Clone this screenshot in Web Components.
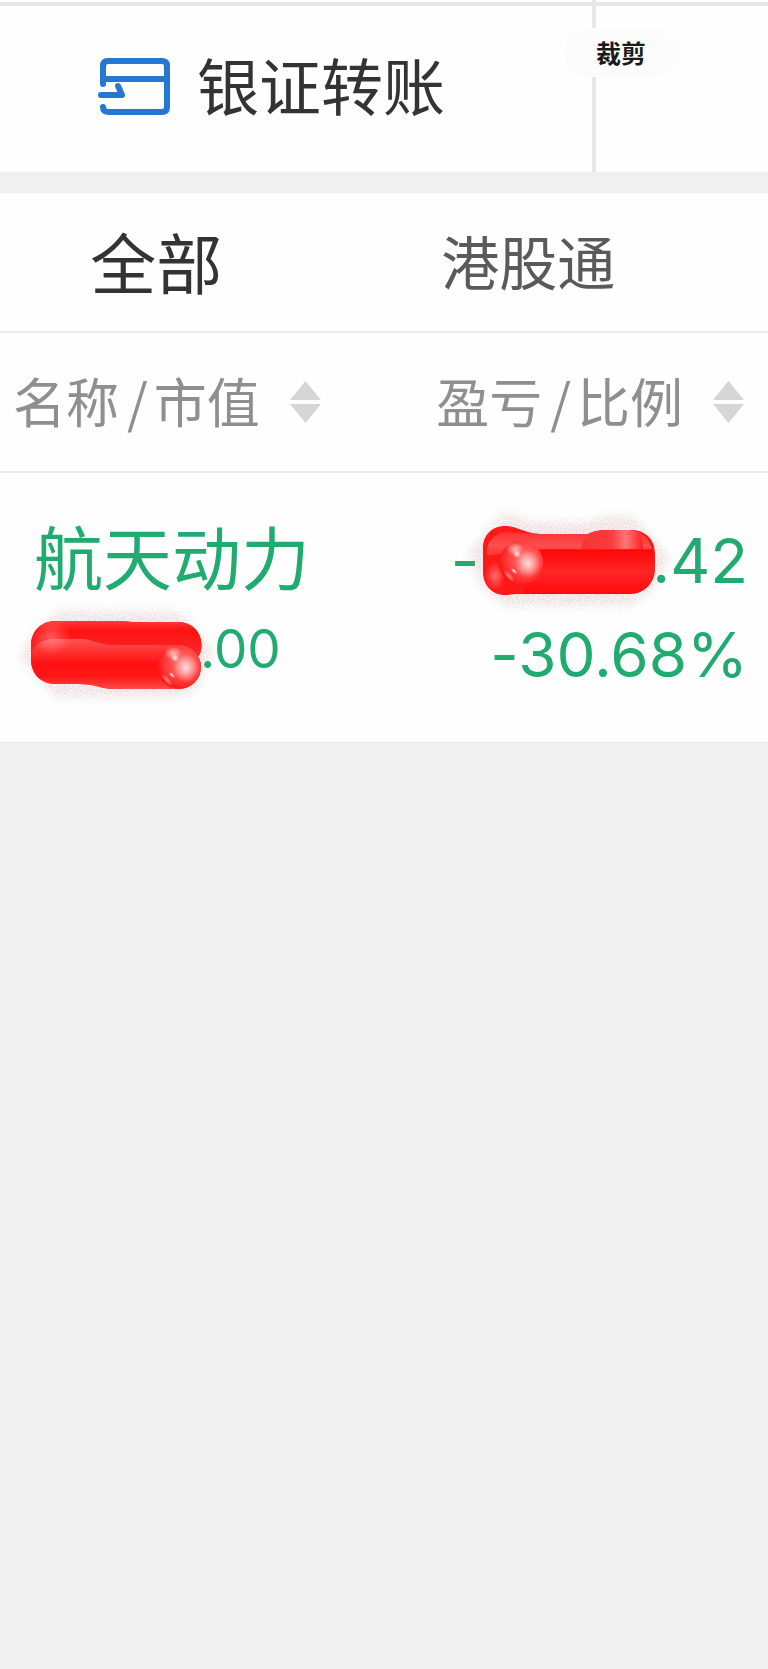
<!DOCTYPE html>
<html lang="zh-CN">
<head>
<meta charset="utf-8">
<meta name="viewport" content="width=device-width, initial-scale=1">
<title>持仓</title>
<style>
  body {
    margin: 0;
    min-height: 100vh;
    background: #f0f0f0;
    color: #333;
    font-family: "Noto Sans CJK SC", sans-serif;
  }
</style>
</head>
<body>
<holdings-page></holdings-page>

<script>
class QuickActions extends HTMLElement {
  constructor() {
    super();

    this.attachShadow({ mode: "open" });

    this.shadowRoot.innerHTML = `
      <style>
      :host {
        display: block;
        position: relative;
        background: #fefefe;
      }
      .row {
        display: grid;
        grid-template-columns: 77.6% 1fr;
        min-height: 2px;
      }
      .row + .row {
        border-top: 4px solid #e7e7e7;
      }
      .cell {
        border-right: 4px solid #e7e7e7;
      }
      .action {
        display: flex;
        align-items: center;
        gap: 27px;
        width: 100%;
        height: 166px;
        padding: 0 0 6px 98px;
        border: 0;
        background: none;
        color: #333;
        font: inherit;
        font-size: 62px;
        line-height: 90px;
        cursor: pointer;
      }
      .action span {
        padding-bottom: 4px;
      }
      svg {
        flex: none;
        fill: none;
        stroke: #2478d0;
        stroke-width: 6;
        stroke-linecap: round;
        stroke-linejoin: round;
      }
      ::slotted(*) {
        position: absolute;
        top: 28px;
        right: 89px;
      }
      </style>
      <div class="row"><div class="cell"></div></div>
      <div class="row">
        <div class="cell">
          <button class="action" type="button">
            <svg width="72" height="57" viewBox="0 0 72 57" aria-hidden="true">
              <path d="M5 26V8Q5 3 10 3H64Q69 3 69 8V49Q69 54 64 54H11Q5 54 5 49"/>
              <path d="M5 21H69"/>
              <path d="M3 37H24L20 28"/>
            </svg>
            <span>银证转账</span>
          </button>
        </div>
      </div>
      <slot></slot>
    `;
  }
}

class CropButton extends HTMLElement {
  constructor() {
    super();

    this.attachShadow({ mode: "open" });

    this.shadowRoot.innerHTML = `
      <style>
      :host {
        display: block;
      }
      button {
        display: block;
        height: 49px;
        padding: 0 33px 2px 32px;
        border: 0;
        border-radius: 25px;
        background: #fcfcfc;
        color: #1a1a1a;
        font: inherit;
        font-size: 25px;
        font-weight: 700;
        line-height: 46px;
        cursor: pointer;
      }
      </style>
      <button type="button"><slot></slot></button>
    `;
  }
}

class MarketTabs extends HTMLElement {
  constructor() {
    super();

    this.attachShadow({ mode: "open" });

    this.shadowRoot.innerHTML = `
      <style>
      :host {
        display: grid;
        grid-template-columns: 42% 1fr;
        padding-right: 24px;
        border-bottom: 2px solid #ececec;
        background: #fefefe;
      }
      button {
        height: 138px;
        padding: 0 0 4px;
        border: 0;
        background: none;
        color: #5a5a5a;
        font: inherit;
        font-size: 58px;
        line-height: 90px;
        cursor: pointer;
      }
      button[aria-selected="true"] {
        color: #333;
        font-size: 66px;
      }
      </style>
    `;

    this.tabs = ["全部", "港股通"];
    this.selected = 0;
  }

  connectedCallback() {
    this.setAttribute("role", "tablist");
    this.tabs.forEach((name, index) => {
      const tab = document.createElement("button");
      tab.type = "button";
      tab.textContent = name;
      tab.setAttribute("role", "tab");
      tab.addEventListener("click", () => this.select(index));
      this.shadowRoot.appendChild(tab);
    });
    this.select(this.selected);
  }

  select(index) {
    this.selected = index;
    this.shadowRoot.querySelectorAll("button").forEach((tab, i) => {
      tab.setAttribute("aria-selected", i === index);
    });
  }
}

// "/" sits between the two words with some air on both sides
class SortButton extends HTMLElement {
  constructor() {
    super();

    this.attachShadow({ mode: "open" });

    this.shadowRoot.innerHTML = `
      <style>
      :host {
        display: inline-block;
        vertical-align: top;
      }
      button {
        display: flex;
        align-items: center;
        height: 138px;
        padding: 0;
        border: 0;
        background: none;
        color: #8f8f8f;
        font: inherit;
        font-size: 53px;
        line-height: 90px;
        cursor: pointer;
      }
      .label {
        padding-bottom: 4px;
      }
      .slash {
        margin: 0 6px 0 8px;
      }
      svg {
        margin-left: 30px;
        fill: #d6d6d6;
      }
      </style>
      <button type="button">
        <span class="label"><slot name="first"></slot><span class="slash">/</span><slot name="second"></slot></span>
        <svg width="31" height="42" viewBox="0 0 31 42" aria-hidden="true">
          <path d="M15.500 0L31 19H0ZM0 23H31L15.500 42Z"/>
        </svg>
      </button>
    `;
  }
}

// Glossy ball at the end of a brush stroke
const ball = (x, y) => `
  <g transform="translate(${x} ${y})">
    <circle r="22" fill="url(#ball)"/>
    <ellipse cx="-6" cy="-14" rx="9" ry="7" fill="url(#shine)" opacity=".7"/>
    <ellipse cx="7" cy="1" rx="13" ry="14" fill="url(#shine)" opacity=".85"/>
    <ellipse cx="-4" cy="-9" rx="4" ry="4" fill="url(#shine)"/>
    <ellipse cx="-7" cy="8" rx="4" ry="2" fill="url(#shine)" transform="rotate(42 -7 8)"/>
    <ellipse cx="-12" cy="13" rx="8" ry="3" fill="url(#shine)" opacity=".5" transform="rotate(48 -12 13)"/>
  </g>`;

const STROKES = {
  low: {
    viewBox: "0 -12 172 80",
    outline: "M25 0H90L102 1H147C161 1 170.500 11 170.500 24Q170.500 31 167 36Q170 40 170 46A22 22 0 0 1 148 68H84C70 68 64 63 48 63H25C10 63 0 53 0 38V25C0 10 10 0 25 0Z",
    halo: "M26 -10H146L182 28L166 68L148 76H24L-10 38L-4 20Z",
    body: `
      <path d="M25 0H90L102 1H147C161 1 170.500 11 170.500 24Q170.500 31 167 36L110 30L0 38V25C0 10 10 0 25 0Z" fill="url(#upper)"/>
      <path d="M0 38C0 26 9 18 24 18H48C64 18 66 24 84 24H148V68H84C70 68 64 63 48 63H25C10 63 0 53 0 38Z" fill="url(#lower)"/>
      <ellipse cx="20" cy="16" rx="20" ry="18" fill="url(#shine)" opacity=".3"/>
      ${ball(148, 46)}`,
  },
  high: {
    viewBox: "0 -5 172 80",
    outline: "M22 0C34 0 42 7 57 8H105Q112 4 124 4H148C163 4 172 14 172 28V43C172 57 161 68 146 68H32Q27 69 22 69C9 69 0 59 0 46V22C0 9 9 0 22 0Z",
    halo: "M22 -14L50 -4H104L122 -10H150L186 30L172 62L148 80H22L-4 58L-14 26Z",
    body: `
      <path d="M4 30Q2 10 22 6L57 8H105Q112 4 124 4H148Q163 5 169 23H60L40 24Z" fill="url(#band)"/>
      <path d="M98 23Q100 6 124 4H148Q160 6 160 23Z" fill="url(#hump)"/>
      <path d="M54 24H170L172 43Q168 68 146 68H40Z" fill="url(#lower2)"/>
      <ellipse cx="12" cy="50" rx="10" ry="14" fill="url(#shine)" opacity=".4"/>
      ${ball(38, 37)}`,
  },
};

class BrushMark extends HTMLElement {
  constructor() {
    super();

    this.attachShadow({ mode: "open" });
  }

  connectedCallback() {
    const stroke = STROKES[this.getAttribute("stroke")];
    this.shadowRoot.innerHTML = `
      <style>
      :host {
        display: block;
        flex: none;
      }
      svg {
        display: block;
        overflow: visible;
      }
      </style>
      <svg width="172" height="80" viewBox="${stroke.viewBox}" aria-hidden="true">
        <defs>
          <linearGradient id="upper" x2="0" y2="1">
            <stop offset="0" stop-color="#ff3a3a"/>
            <stop offset=".25" stop-color="#ff1212"/>
            <stop offset="1" stop-color="#f82c2c"/>
          </linearGradient>
          <linearGradient id="lower" x2="0" y2="1">
            <stop offset="0" stop-color="#ff5252"/>
            <stop offset=".5" stop-color="#ff1010"/>
            <stop offset=".75" stop-color="#ff1616"/>
            <stop offset="1" stop-color="#ff4a4a"/>
          </linearGradient>
          <linearGradient id="band" x2="0" y2="1">
            <stop offset="0" stop-color="#ff2e2e"/>
            <stop offset=".6" stop-color="#fb4e4e"/>
            <stop offset="1" stop-color="#ff3030"/>
          </linearGradient>
          <linearGradient id="hump">
            <stop offset="0" stop-color="#f63434"/>
            <stop offset=".5" stop-color="#fb3c3c"/>
            <stop offset=".72" stop-color="#ff7676"/>
            <stop offset="1" stop-color="#ff2020"/>
          </linearGradient>
          <linearGradient id="lower2" x2="0" y2="1">
            <stop offset="0" stop-color="#ff0808"/>
            <stop offset=".5" stop-color="#ff2626"/>
            <stop offset="1" stop-color="#ff0a0a"/>
          </linearGradient>
          <radialGradient id="ball" cx=".6" cy=".42" r=".6">
            <stop offset="0" stop-color="#ff7a7a"/>
            <stop offset=".6" stop-color="#ff4444"/>
            <stop offset="1" stop-color="#ff1616"/>
          </radialGradient>
          <radialGradient id="shine">
            <stop offset="0" stop-color="#fff" stop-opacity=".9"/>
            <stop offset="1" stop-color="#fff" stop-opacity="0"/>
          </radialGradient>
          <filter id="grain" x="-20%" y="-40%" width="140%" height="180%">
            <feGaussianBlur in="SourceGraphic" stdDeviation="5" result="soft"/>
            <feTurbulence type="fractalNoise" baseFrequency=".7" numOctaves="2" seed="4"/>
            <feColorMatrix values="0 0 0 0 0  0 0 0 0 0  0 0 0 0 0  0 0 0 2 -.4"/>
            <feComposite in="soft" operator="in"/>
          </filter>
        </defs>
        <path d="${stroke.halo}" fill="#b07070" opacity=".25" filter="url(#grain)"/>
        <path d="${stroke.outline}" fill="#ff1818"/>
        ${stroke.body}
      </svg>
    `;
  }
}

class HoldingsTable extends HTMLElement {
  constructor() {
    super();

    this.attachShadow({ mode: "open" });

    this.shadowRoot.innerHTML = `
      <style>
      :host {
        display: block;
        background: #fefefe;
      }
      table {
        width: 100%;
        border-collapse: separate;
        border-spacing: 0;
      }
      th, td {
        padding: 0;
        text-align: left;
        vertical-align: top;
        font-weight: 400;
      }
      th {
        border-bottom: 2px solid #ececec;
      }
      th:first-child {
        padding-left: 13px;
      }
      th:last-child {
        padding-right: 24px;
        text-align: right;
      }
      td {
        padding: 41px 20px 40px 34px;
        border-bottom: 1px solid #e6e6e6;
        color: #22ab70;
      }
      .name {
        height: 90px;
        font-size: 69px;
        line-height: 82px;
      }
      .value, .number {
        display: flex;
        align-items: center;
        font-family: Inter, sans-serif;
        font-variant-ligatures: no-contextual;
      }
      .value {
        font-size: 53px;
        line-height: 90px;
      }
      .number {
        justify-content: flex-end;
        font-size: 62px;
        line-height: 94px;
      }
      brush-mark {
        margin: 0 -3px;
      }
      .number brush-mark {
        margin-left: 4px;
      }
      </style>
      <table>
        <thead>
          <tr>
            <th scope="col"><sort-button><span slot="first">名称</span><span slot="second">市值</span></sort-button></th>
            <th scope="col"><sort-button><span slot="first">盈亏</span><span slot="second">比例</span></sort-button></th>
          </tr>
        </thead>
        <tbody></tbody>
      </table>
    `;

    this.holdings = [
      {
        name: "航天动力",
        value: ".00",
        profit: ".42",
        ratio: "-30.68%",
      },
    ];
  }

  connectedCallback() {
    this.renderHoldings();
  }

  renderHoldings() {
    this.shadowRoot.querySelector("tbody").innerHTML = this.holdings
      .map(
        (holding) => `
        <tr>
          <td>
            <div class="name">${holding.name}</div>
            <div class="value"><brush-mark stroke="low"></brush-mark><span>${holding.value}</span></div>
          </td>
          <td>
            <div class="number"><span>-</span><brush-mark stroke="high"></brush-mark><span>${holding.profit}</span></div>
            <div class="number">${holding.ratio}</div>
          </td>
        </tr>`
      )
      .join("");
  }
}

class HoldingsPage extends HTMLElement {
  constructor() {
    super();

    this.attachShadow({ mode: "open" });

    this.shadowRoot.innerHTML = `
      <style>
      :host {
        display: block;
      }
      market-tabs {
        margin-top: 21px;
      }
      </style>
      <quick-actions><crop-button>裁剪</crop-button></quick-actions>
      <market-tabs></market-tabs>
      <holdings-table></holdings-table>
    `;
  }
}

customElements.define("quick-actions", QuickActions);
customElements.define("crop-button", CropButton);
customElements.define("market-tabs", MarketTabs);
customElements.define("sort-button", SortButton);
customElements.define("brush-mark", BrushMark);
customElements.define("holdings-table", HoldingsTable);
customElements.define("holdings-page", HoldingsPage);
</script>
</body>
</html>
